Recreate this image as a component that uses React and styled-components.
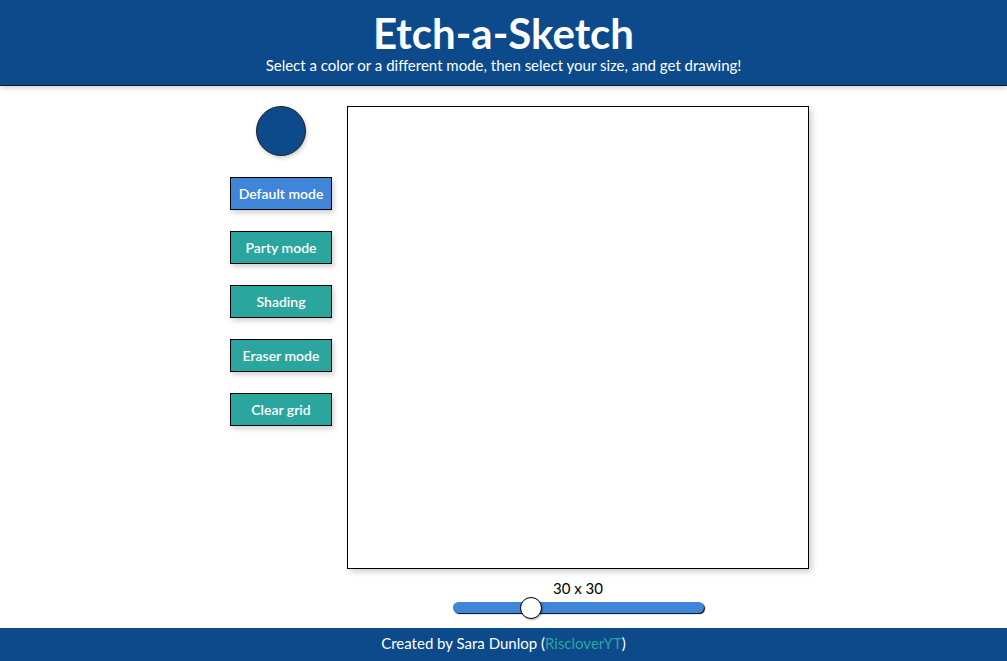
import React, { useState } from 'react';
import styled, { createGlobalStyle } from 'styled-components';

const GlobalStyle = createGlobalStyle`
  html, body {
    margin: 0;
    padding: 0;
    font-family: 'Lato', 'Open Sans', sans-serif;
  }
`;

const modes = ['Default mode', 'Party mode', 'Shading', 'Eraser mode', 'Clear grid'];

const App = () => {
  const [active] = useState('Default mode');
  const [size, setSize] = useState(30);

  return (
    <>
      <GlobalStyle />
      <Page>
        <Header>
          <h1>Etch-a-Sketch</h1>
          <p>Select a color or a different mode, then select your size, and get drawing!</p>
        </Header>
        <Main>
          <Sidebar>
            <ColorSwatch />
            {modes.map(m => (
              <ModeButton key={m} $active={m === active}>{m}</ModeButton>
            ))}
          </Sidebar>
          <Board>
            <Grid />
            <SizeLabel>{`${size} x ${size}`}</SizeLabel>
            <Slider
              type="range"
              min="1"
              max="100"
              value={size}
              onChange={e => setSize(e.target.value)}
            />
          </Board>
        </Main>
        <Footer>
          Created by Sara Dunlop (<a href="#">RiscloverYT</a>)
        </Footer>
      </Page>
    </>
  );
};

export default App;

const Page = styled.div`
  min-height: 100vh;
  display: flex;
  flex-direction: column;
`;

const Header = styled.header`
  background: #0c4a8b;
  color: #fff;
  text-align: center;
  height: 85px;
  border-bottom: 1px solid #1b1b1b;
  box-shadow: 0 2px 5px rgba(0, 0, 0, 0.18);
  display: flex;
  flex-direction: column;
  align-items: center;
  h1 {
    margin: 9px 0 0;
    font-size: 42px;
    font-weight: 700;
    line-height: 48px;
  }
  p {
    margin: -2px 0 0;
    font-size: 15px;
    line-height: 20px;
  }
`;

const Main = styled.main`
  flex: 1;
  display: flex;
  justify-content: center;
  align-items: flex-start;
  gap: 15px;
  padding: 20px 0 0 32px;
`;

const Sidebar = styled.div`
  width: 102px;
  display: flex;
  flex-direction: column;
  align-items: center;
  gap: 21px;
`;

const ColorSwatch = styled.div`
  width: 48px;
  height: 48px;
  border-radius: 50%;
  background: #0c4a8b;
  border: 1px solid #222;
  box-shadow: 1px 2px 4px rgba(0, 0, 0, 0.2);
`;

const ModeButton = styled.button`
  width: 102px;
  height: 33px;
  border: 1px solid #000;
  background: ${p => (p.$active ? '#3f86d8' : '#2aa69f')};
  color: #fff;
  font-family: 'Lato', sans-serif;
  font-size: 14px;
  font-weight: 600;
  box-shadow: 2px 3px 5px rgba(0, 0, 0, 0.18);
  cursor: pointer;
  padding: 0;
`;

const Board = styled.div`
  display: flex;
  flex-direction: column;
  align-items: center;
`;

const Grid = styled.div`
  width: 460px;
  height: 461px;
  border: 1px solid #000;
  background: #fff;
  box-shadow: 3px 3px 6px rgba(0, 0, 0, 0.18);
`;

const SizeLabel = styled.div`
  margin-top: 10px;
  font-family: 'Lato', sans-serif;
  font-size: 15px;
  line-height: 18px;
  color: #000;
`;

const Slider = styled.input`
  -webkit-appearance: none;
  appearance: none;
  width: 251px;
  height: 11px;
  margin: 5px 0 0;
  border-radius: 6px;
  background: #3f86d8;
  box-shadow: 1px 1px 1px #000;
  outline: none;
  &::-webkit-slider-thumb {
    -webkit-appearance: none;
    width: 22px;
    height: 22px;
    border-radius: 50%;
    background: #fff;
    border: 1px solid #000;
    box-shadow: 1px 1px 2px rgba(0, 0, 0, 0.3);
    cursor: pointer;
  }
`;

const Footer = styled.footer`
  background: #0c4a8b;
  color: #fff;
  height: 33px;
  padding-bottom: 3px;
  box-sizing: border-box;
  display: flex;
  align-items: center;
  justify-content: center;
  font-size: 15px;
  a {
    color: #2aa69f;
    text-decoration: none;
  }
`;
